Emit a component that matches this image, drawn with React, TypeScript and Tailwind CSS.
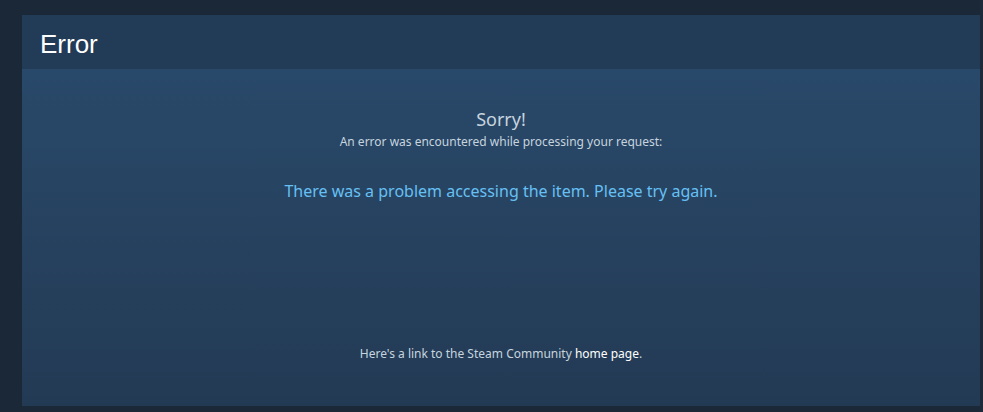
import React from "react";

export default function App() {
  return (
    <div className="w-[983px] h-[412px] bg-[#1b2838] overflow-hidden" style={{ fontFamily: '"Noto Sans", "Open Sans", Arial, sans-serif' }}>
      <div className="flex h-full">
        <div className="w-[22px] shrink-0" />
        <div className="w-[958px] shrink-0 mt-[15px] h-[391px] flex flex-col">
          <div className="h-[54px] bg-[#223b56] flex items-center pl-[18px] pt-[3px]">
            <h1 className="text-[26px] text-white leading-none font-normal" style={{ fontFamily: '"Liberation Sans", Arial, sans-serif' }}>Error</h1>
          </div>
          <div className="flex-1 bg-gradient-to-b from-[#29496a] to-[#233a54] flex flex-col items-center">
            <div className="mt-[38px] text-[18px] leading-[24px] text-[#c6d4df]">Sorry!</div>
            <div className="mt-[3px] text-[12px] leading-[16px] text-[#c6d4df]">An error was encountered while processing your request:</div>
            <div className="mt-[30px] text-[16px] leading-[22px] text-[#66c0f4]">There was a problem accessing the item. Please try again.</div>
            <div className="mt-[144px] text-[12px] leading-[16px] text-[#c6d4df]">
              Here's a link to the Steam Community <a className="text-white">home page</a>.
            </div>
          </div>
        </div>
        <div className="flex-1 bg-[#1e2a3a]" />
      </div>
    </div>
  );
}
